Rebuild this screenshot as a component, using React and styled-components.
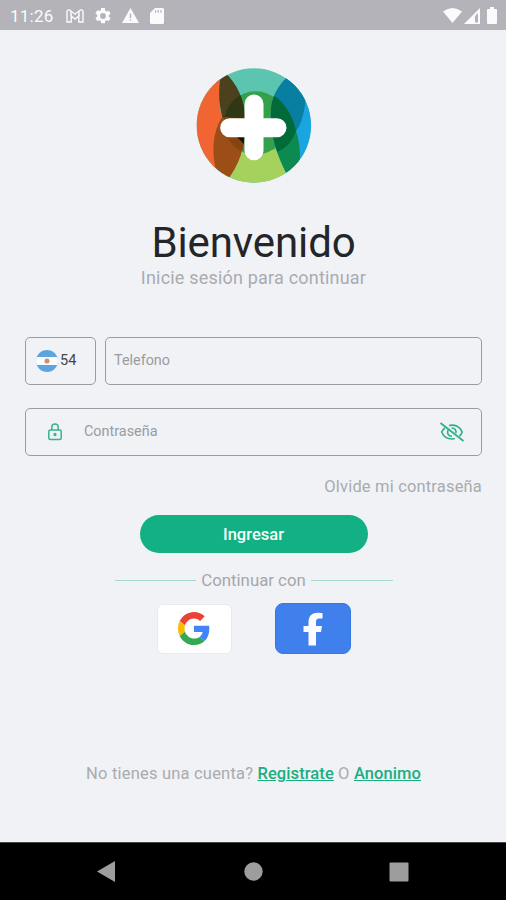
import React from "react";
import styled, { createGlobalStyle } from "styled-components";

const GlobalStyle = createGlobalStyle`
  * {
    box-sizing: border-box;
  }

  body {
    margin: 0;
    background: #f0f2f6;
    font-family: Roboto, "Liberation Sans", sans-serif;
  }
`;

const Screen = styled.div`
  width: 506px;
  height: 900px;
  display: flex;
  flex-direction: column;
  overflow: hidden;
  background: #f0f2f6;
`;

const StatusBar = styled.header`
  height: 30px;
  flex: none;
  display: flex;
  justify-content: space-between;
  padding: 1px 8px 0 10px;
  background: #b4b3b9;
  color: #fbfbfc;
`;

const StatusGroup = styled.div`
  display: flex;
  align-items: center;
  gap: ${(props) => props.$gap}px;
`;

const Clock = styled.span`
  width: 45px;
  font-size: 17px;
  letter-spacing: 0.25px;
`;

const Main = styled.main`
  flex: 1;
  display: flex;
  flex-direction: column;
  align-items: center;
  padding: 38px 24px 0 25px;
`;

const LogoImage = styled.svg`
  width: 115px;
  height: 115px;
`;

const Title = styled.h1`
  margin: 35px 0 0;
  height: 50px;
  line-height: 50px;
  font-size: 42px;
  font-weight: 400;
  letter-spacing: -0.1px;
  color: #242529;
`;

const Subtitle = styled.p`
  margin: 0;
  height: 22px;
  line-height: 20px;
  font-size: 18px;
  letter-spacing: 0.2px;
  color: #a9abb0;
`;

const Form = styled.form`
  width: 100%;
  margin-top: 47px;
  display: flex;
  flex-direction: column;
`;

const Row = styled.div`
  display: flex;
  gap: 9px;
  margin-bottom: 23px;
`;

const Field = styled.label`
  height: 48px;
  display: flex;
  align-items: center;
  gap: ${(props) => props.$gap || 0}px;
  flex: ${(props) => (props.$width ? "none" : 1)};
  width: ${(props) => props.$width || "auto"};
  padding: ${(props) => props.$padding};
  border: 1px solid #9b9ca1;
  border-radius: 5px;
  font-size: 14.5px;
  color: #45464a;

  svg {
    flex: none;
  }
`;

const DialCode = styled.span`
  padding-bottom: 2px;
`;

const Input = styled.input`
  flex: 1;
  min-width: 0;
  padding: 0 0 2px;
  border: none;
  outline: none;
  background: transparent;
  font: inherit;
  font-size: 14.4px;

  &::placeholder {
    color: #9a9ca1;
    opacity: 1;
  }
`;

const Forgot = styled.a`
  align-self: flex-end;
  height: 20px;
  line-height: 20px;
  margin-top: -2px;
  font-size: 16.5px;
  letter-spacing: 0.17px;
  color: #a9abb0;
`;

const Submit = styled.button`
  align-self: center;
  width: 228px;
  height: 38px;
  margin: 18px 0 0;
  padding: 0;
  border: none;
  border-radius: 19px;
  background: #12b083;
  color: #f5fffb;
  font-family: inherit;
  font-size: 16.5px;
  font-weight: 500;
`;

const Divider = styled.div`
  display: flex;
  align-items: center;
  gap: 5px;
  width: 278px;
  height: 20px;
  margin-top: 17px;
  font-size: 16.8px;
  white-space: nowrap;
  color: #a5a7ac;

  &::before,
  &::after {
    content: "";
    flex: 1;
    height: 1px;
    background: #a3d8cc;
  }
`;

const Socials = styled.div`
  display: flex;
  align-items: center;
  gap: 43px;
  margin-top: 13px;
`;

const SocialButton = styled.button`
  display: flex;
  align-items: center;
  justify-content: center;
  width: ${(props) => (props.$facebook ? 76 : 75)}px;
  height: ${(props) => (props.$facebook ? 51 : 50)}px;
  padding: 0;
  border: 1px solid ${(props) => (props.$facebook ? "#3679e4" : "#e8eaee")};
  border-radius: ${(props) => (props.$facebook ? 8 : 6)}px;
  background: ${(props) => (props.$facebook ? "#4080ed" : "#fff")};
`;

const Register = styled.p`
  margin: 110px 0 0;
  height: 20px;
  line-height: 20px;
  font-size: 16.5px;
  letter-spacing: 0.2px;
  color: #a9abb0;
`;

const GreenLink = styled.a`
  color: #1aae80;
  font-weight: 500;
  letter-spacing: 0.08px;
  text-decoration: underline;
  text-underline-offset: 1px;
`;

const NavBar = styled.nav`
  height: 58px;
  flex: none;
  display: flex;
  align-items: center;
  justify-content: space-between;
  padding: 0 97px;
  border-top: 1px solid #45464a;
  background: #000;
`;

const HomeIcon = styled.svg`
  width: 19px;
  height: 19px;
  margin-left: 2px;
`;

const Logo = () => (
  <LogoImage viewBox="31 25 345 345">
    <defs>
      <clipPath id="disc">
        <circle cx="204.5" cy="197.5" r="171.5" />
      </clipPath>
      <clipPath id="core">
        <circle cx="210" cy="190" r="95" />
      </clipPath>
      <clipPath id="leftLens">
        <path d="M100 20L117 38C155 72 179 125 178 180C182 250 165 315 118 370H70V20z" />
      </clipPath>
      <clipPath id="rightLens">
        <path d="M322 38C273 75 255 118 255 165C255 225 273 290 310 355H380V20z" />
      </clipPath>
    </defs>
    <g clipPath="url(#disc)">
      <path fill="#5cc5b0" d="M32 25h345v345H32z" />
      <path fill="#a5d15d" d="M100 270H340V370H100z" />
      <circle cx="210" cy="190" r="95" fill="#35a04a" />
      {/* left lens */}
      <g clipPath="url(#leftLens)">
        <path fill="#4b421d" d="M80 20H190V200L110 176z" />
        <path fill="#9b4e15" d="M80 170L110 176L190 180V370H80z" />
        <g clipPath="url(#core)">
          <path fill="#2f3713" d="M95 80H190V190L110 171z" />
          <path fill="#87430f" d="M110 171L190 180V290H80z" />
        </g>
        <path fill="#11150a" d="M148 205h32v60C174 250 162 238 148 228z" />
      </g>
      <path fill="#f16532" d="M32 25H108C98 80 98 135 109 173C82 215 75 280 95 345V370H32z" />
      {/* right lens */}
      <g clipPath="url(#rightLens)">
        <path fill="#1ba5df" d="M240 25H377V370H240z" />
        <path fill="#087ea0" d="M240 25H355C367 120 356 180 331 215L240 230z" />
        <path fill="#0b8b50" d="M240 215H331C345 255 346 300 338 370H240z" />
        <path fill="#006b38" d="M240 98C285 108 320 160 331 215C315 255 290 278 240 287z" />
      </g>
    </g>
    <path d="M205 133V273M132 204.5H274" stroke="#fff" strokeWidth="57" strokeLinecap="round" />
  </LogoImage>
);

const Flag = () => (
  <svg width="22" height="22" viewBox="0 0 22 22">
    <clipPath id="flag">
      <circle cx="11" cy="11" r="11" />
    </clipPath>
    <g clipPath="url(#flag)">
      <path fill="#5da5df" d="M0 0h22v22H0z" />
      <path fill="#fafbfd" d="M0 7h22v8H0z" />
      <circle cx="11" cy="11" r="2.5" fill="#d58d65" />
    </g>
  </svg>
);

const Lock = () => (
  <svg width="14" height="18" viewBox="0 0 14 18" fill="none" stroke="#35b58d" strokeWidth="1.5">
    <rect x="0.8" y="7" width="12.4" height="9.5" rx="1.5" />
    <path d="M3.8 7V4.2a3.2 3.2 0 0 1 6.4 0V7" />
    <circle cx="7" cy="11.5" r="0.9" fill="#35b58d" />
  </svg>
);

const EyeOff = () => (
  <svg width="24" height="20" viewBox="0 0 24 20" fill="none" stroke="#2cb186" strokeWidth="1.6">
    <path d="M0.5 1L23.5 19" strokeWidth="1.8" />
    <path d="M5 6C3.6 7 2.2 8.5 1.7 10C3.3 14 7.3 17 12 17L14.8 16.5" />
    <path d="M9 3.5C15 2 20.3 5 22.2 10C21.7 11.6 20.8 12.9 19.4 14" />
    <path d="M8.2 8C6.5 11 8.2 14.2 12 14.2M11.5 6C14.8 5.8 16.7 8.6 15.8 11.2" />
  </svg>
);

const GoogleIcon = () => (
  <svg width="32" height="33" viewBox="0 0 48 48" preserveAspectRatio="none">
    <path fill="#EA4335" d="M24 9.5c3.54 0 6.71 1.22 9.21 3.6l6.85-6.85C35.9 2.38 30.47 0 24 0 14.62 0 6.51 5.38 2.56 13.22l7.98 6.19C12.43 13.72 17.74 9.5 24 9.5z" />
    <path fill="#4285F4" d="M46.98 24.55c0-1.57-.15-3.09-.38-4.55H24v9.02h12.94c-.58 2.96-2.26 5.48-4.78 7.18l7.73 6c4.51-4.18 7.09-10.36 7.09-17.65z" />
    <path fill="#FBBC05" d="M10.53 28.59c-.48-1.45-.76-2.99-.76-4.59s.27-3.14.76-4.59l-7.98-6.19C.92 16.46 0 20.12 0 24c0 3.88.92 7.54 2.56 10.78l7.97-6.19z" />
    <path fill="#34A853" d="M24 48c6.48 0 11.93-2.13 15.89-5.81l-7.73-6c-2.15 1.45-4.92 2.3-8.16 2.3-6.26 0-11.57-4.22-13.47-9.91l-7.98 6.19C6.51 42.62 14.62 48 24 48z" />
  </svg>
);

const FacebookIcon = () => (
  <svg width="20" height="34" viewBox="0 0 20 34" fill="#fafbff">
    <path d="M5.5 33.5V20H0.5V14H5.5V10C5.5 3.8 9.3 0.8 14.8 0.8C16.8 0.8 18.4 1 19.5 1.2V6.6H16.3C13.8 6.6 13 7.8 13 10V14H19L18 20H13V33.5z" />
  </svg>
);

const App = () => {
  return (
    <>
      <GlobalStyle />
      <Screen>
        <StatusBar>
          <StatusGroup $gap={11}>
            <Clock>11:26</Clock>
            <svg width="18" height="14" viewBox="0 0 18 14" fill="none" stroke="currentColor" strokeWidth="1.4">
              <path d="M1 2.5Q2 0 4 1.3L9 5.2L14 1.3Q16 0 17 2.5V13H12.8V7L9 10L5.2 7V13H1z" />
              <path d="M5 2V7M13 2V7" />
            </svg>
            <svg width="16" height="16" viewBox="2 2 20 20" fill="currentColor">
              <path d="M19.14 12.94c.04-.3.06-.61.06-.94s-.02-.64-.07-.94l2.03-1.58a.49.49 0 0 0 .12-.61l-1.92-3.32a.49.49 0 0 0-.59-.22l-2.39.96a7 7 0 0 0-1.62-.94l-.36-2.54A.48.48 0 0 0 13.92 2h-3.84a.48.48 0 0 0-.48.41l-.36 2.54a7 7 0 0 0-1.62.94l-2.39-.96a.48.48 0 0 0-.59.22L2.72 8.47a.49.49 0 0 0 .12.61l2.03 1.58a6 6 0 0 0 0 1.88l-2.03 1.58a.49.49 0 0 0-.12.61l1.92 3.32c.12.22.37.29.59.22l2.39-.96c.5.38 1.03.7 1.62.94l.36 2.54c.05.24.24.41.48.41h3.84c.24 0 .44-.17.48-.41l.36-2.54a7 7 0 0 0 1.62-.94l2.39.96c.22.08.47 0 .59-.22l1.92-3.32a.49.49 0 0 0-.12-.61zM12 15.6a3.6 3.6 0 1 1 0-7.2 3.6 3.6 0 0 1 0 7.2z" />
            </svg>
            <svg width="17" height="15" viewBox="0 0 17 15" fill="currentColor" fillRule="evenodd">
              <path d="M8.5 0L17 15H0zM7.8 5.5V10H9.2V5.5zM7.8 11.3V12.8H9.2V11.3z" />
            </svg>
            <svg width="14" height="16" viewBox="0 0 14 16" fill="currentColor" fillRule="evenodd">
              <path d="M5 0H12.5Q14 0 14 1.5V14.5Q14 16 12.5 16H1.5Q0 16 0 14.5V5zM5 2V4.8H6.2V2zM7.7 2V4.8H8.9V2zM10.4 2V4.8H11.6V2z" />
            </svg>
          </StatusGroup>
          <StatusGroup $gap={2}>
            <svg width="19" height="15" viewBox="0 0 19 15" fill="currentColor">
              <path d="M0 3.5Q9.5 -3.5 19 3.5L9.5 15z" />
            </svg>
            <svg width="16" height="16" viewBox="0 0 16 16" fill="currentColor">
              <path fillRule="evenodd" d="M16 0V16H0zM14 5L11 8V14.5H14z" />
            </svg>
            <svg width="16" height="17" viewBox="0 0 16 17" fill="currentColor">
              <path d="M8 0h4v2h2q1 0 1 1v13q0 1-1 1H6q-1 0-1-1V3q0-1 1-1h2z" />
            </svg>
          </StatusGroup>
        </StatusBar>

        <Main>
          <Logo />
          <Title>Bienvenido</Title>
          <Subtitle>Inicie sesión para continuar</Subtitle>
          <Form>
            <Row>
              <Field as="div" $width="71px" $padding="0 0 0 10px" $gap={2}>
                <Flag />
                <DialCode>54</DialCode>
              </Field>
              <Field $padding="0 8px">
                <Input type="tel" placeholder="Telefono" />
              </Field>
            </Row>
            <Row>
              <Field $padding="0 17px 0 22px" $gap={22}>
                <Lock />
                <Input type="password" placeholder="Contraseña" />
                <EyeOff />
              </Field>
            </Row>
            <Forgot>Olvide mi contraseña</Forgot>
            <Submit type="button">Ingresar</Submit>
          </Form>
          <Divider>Continuar con</Divider>
          <Socials>
            <SocialButton aria-label="Google">
              <GoogleIcon />
            </SocialButton>
            <SocialButton $facebook aria-label="Facebook">
              <FacebookIcon />
            </SocialButton>
          </Socials>
          <Register>
            No tienes una cuenta? <GreenLink>Registrate</GreenLink> O <GreenLink>Anonimo</GreenLink>
          </Register>
        </Main>

        <NavBar>
          <svg width="18" height="21" viewBox="0 0 18 21" fill="#9d9d9d">
            <path d="M18 0V21L0 10.5z" />
          </svg>
          <HomeIcon viewBox="0 0 19 19" fill="#9d9d9d">
            <circle cx="9.5" cy="9.5" r="9.2" />
          </HomeIcon>
          <svg width="20" height="20" viewBox="0 0 20 20" fill="#9d9d9d">
            <rect x="0.5" y="0.5" width="19" height="19" rx="1" />
          </svg>
        </NavBar>
      </Screen>
    </>
  );
};

export default App;
